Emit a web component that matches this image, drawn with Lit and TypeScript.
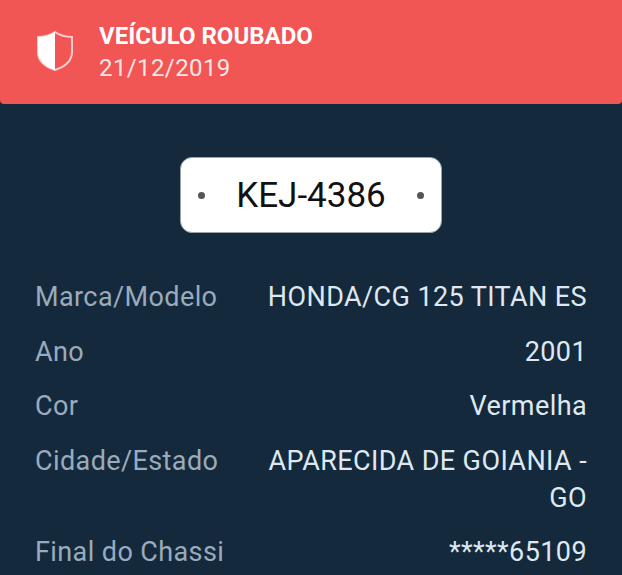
import { LitElement, html, css } from 'lit';
import { customElement } from 'lit/decorators.js';

const rows = [
	['Marca/Modelo', 'HONDA/CG 125 TITAN ES'],
	['Ano', '2001'],
	['Cor', 'Vermelha'],
	['Cidade/Estado', 'APARECIDA DE GOIANIA - GO'],
	['Final do Chassi', '*****65109'],
];

@customElement('app-root')
export class AppRoot extends LitElement {
	static styles = css`
		:host {
			display: block;
			width: 622px;
			height: 575px;
			overflow: hidden;
			background: #15293c;
			font-family: Roboto, "Liberation Sans", sans-serif;
		}
		.banner {
			height: 104px;
			box-sizing: border-box;
			padding: 21px 0 0 37px;
			display: flex;
			gap: 26px;
			background: #f15554;
			border-radius: 0 0 4px 4px;
			color: #fff;
		}
		.shield {
			width: 36px;
			height: 40px;
			margin-top: 10px;
			flex: none;
		}
		.title {
			font-size: 24px;
			line-height: 30px;
			font-weight: 700;
		}
		.date {
			font-size: 24px;
			line-height: 34px;
			letter-spacing: 0.4px;
			color: #fde6e6;
		}
		.plate-wrap {
			display: flex;
			justify-content: center;
			padding-top: 53px;
		}
		.plate {
			width: 262px;
			height: 76px;
			box-sizing: border-box;
			padding: 0 17px;
			display: flex;
			align-items: center;
			justify-content: space-between;
			background: #fff;
			border: 1px solid #9aa3ab;
			border-radius: 12px;
			color: #111;
			font-size: 35px;
		}
		.dot {
			width: 7px;
			height: 7px;
			border-radius: 50%;
			background: #555;
		}
		.rows {
			display: grid;
			grid-template-columns: 183px 1fr;
			column-gap: 44px;
			row-gap: 17.5px;
			padding: 46px 35px 0;
			font-size: 27px;
			line-height: 37px;
			letter-spacing: 0.4px;
		}
		.label {
			color: #9aabbc;
			white-space: nowrap;
		}
		.value {
			color: #dfe8f1;
			text-align: right;
		}
	`;

	render() {
		return html`
			<div class="banner">
				<svg class="shield" viewBox="0 0 36 40">
					<path d="M18 1 C23 4.500 29 6 35 6 V21 C35 30 27 36 18 39 C9 36 1 30 1 21 V6 C7 6 13 4.500 18 1 Z" fill="none" stroke="#fff" stroke-width="2" stroke-opacity="0.7"></path>
					<path d="M18 1 V39 C9 36 1 30 1 21 V6 C7 6 13 4.500 18 1 Z" fill="#fff"></path>
				</svg>
				<div>
					<div class="title">VEÍCULO ROUBADO</div>
					<div class="date">21/12/2019</div>
				</div>
			</div>
			<div class="plate-wrap">
				<div class="plate">
					<span class="dot"></span>
					<span>KEJ-4386</span>
					<span class="dot"></span>
				</div>
			</div>
			<div class="rows">
				${rows.map(
					([label, value]) => html`
						<div class="label">${label}</div>
						<div class="value">${value}</div>
					`,
				)}
			</div>
		`;
	}
}
